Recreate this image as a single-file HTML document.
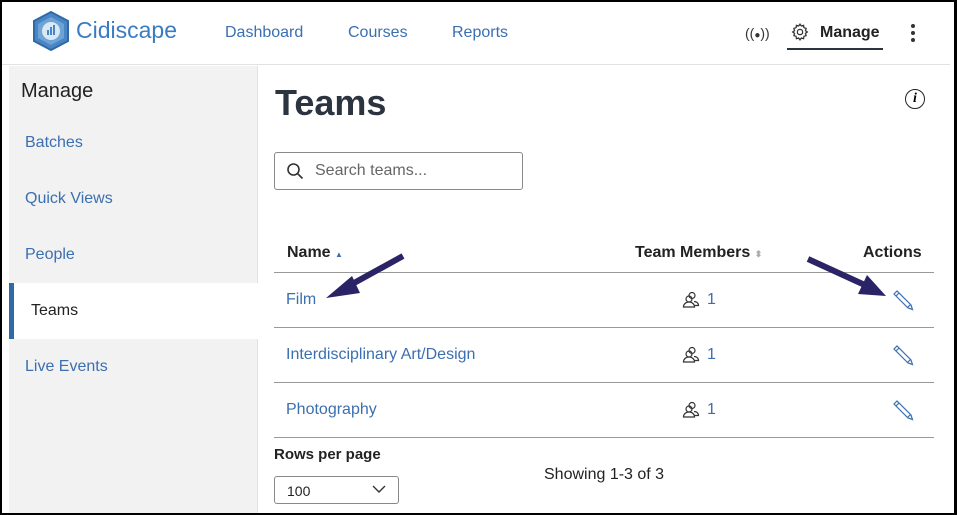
<!DOCTYPE html>
<html><head><style>
*{margin:0;padding:0;box-sizing:border-box}
body{width:957px;height:515px;overflow:hidden;background:#fff;font-family:"Liberation Sans",sans-serif;position:relative}
.frame{position:absolute;inset:0;border:2px solid #000;border-right-width:3px;border-bottom-width:2px;z-index:10;pointer-events:none}
.a{position:absolute;white-space:nowrap}
.nav{color:#3b6fb0;font-size:16px;top:24px}
.side{position:absolute;left:9px;top:66px;width:249px;height:449px;background:#f2f2f2;border-right:1px solid #e2e2e2}
.si{position:absolute;left:16px;font-size:16px;color:#3b6fb0}
.row{position:absolute;left:274px;width:660px;border-top:1px solid #999}
.lnk{color:#3b6fb0;font-size:16px}
</style></head><body>
<div class="frame"></div>
<svg class="a" style="left:30px;top:10px" width="42" height="42" viewBox="0 0 42 42">
<polygon points="21,2 38,11 38,31 21,40 4,31 4,11" fill="#4a86c5" stroke="#2f6aa8" stroke-width="2"/>
<polygon points="21,7 34,14 34,28 21,35 8,28 8,14" fill="#6ea3d6"/>
<circle cx="21" cy="21" r="9" fill="#d9e8f5"/>
<rect x="17" y="20" width="2" height="5" fill="#4a86c5"/><rect x="20" y="17" width="2" height="8" fill="#4a86c5"/><rect x="23" y="15" width="2" height="10" fill="#4a86c5"/>
</svg>
<div class="a" style="left:76px;top:17px;font-size:23px;color:#3a7cc1">Cidiscape</div>
<div class="a nav" style="left:225px">Dashboard</div>
<div class="a nav" style="left:348px">Courses</div>
<div class="a nav" style="left:452px">Reports</div>
<div class="a" style="left:745px;top:25px;font-size:14px;color:#333">((<span style="font-size:10px">●</span>))</div>
<svg class="a" style="left:790px;top:22px" width="20" height="20" viewBox="0 0 24 24" fill="none" stroke="#333" stroke-width="1.5"><circle cx="12" cy="12" r="3.2"/><path d="M12 2.5l1.6 2.3 2.7-.8.4 2.8 2.7.9-.9 2.7 2.3 1.6-2.3 1.6.9 2.7-2.7.9-.4 2.8-2.7-.8L12 21.5l-1.6-2.3-2.7.8-.4-2.8-2.7-.9.9-2.7L3.2 12l2.3-1.6-.9-2.7 2.7-.9.4-2.8 2.7.8z"/></svg>
<div class="a" style="left:820px;top:24px;font-size:16px;font-weight:bold;color:#222">Manage</div>
<div class="a" style="left:787px;top:48px;width:96px;height:2px;background:#2b3440"></div>
<div class="a" style="left:911px;top:24px;width:4px;height:4px;border-radius:2px;background:#333;box-shadow:0 7px 0 #333,0 14px 0 #333"></div>
<div class="a" style="left:0;top:64px;width:950px;height:1px;background:#e2e2e2"></div>
<div class="side">
<div class="a" style="left:12px;top:14px;font-size:20px;color:#222">Manage</div>
<div class="si" style="top:68px">Batches</div>
<div class="si" style="top:124px">Quick Views</div>
<div class="si" style="top:180px">People</div>
<div class="a" style="left:0;top:217px;width:249px;height:56px;background:#fff;border-left:5px solid #2f6aa8"></div>
<div class="si" style="top:236px;left:22px;color:#222">Teams</div>
<div class="si" style="top:292px">Live Events</div>
</div>
<div class="a" style="left:275px;top:82px;font-size:36px;font-weight:bold;color:#2b3440">Teams</div>
<div class="a" style="left:905px;top:89px;width:20px;height:20px;border:1.5px solid #222;border-radius:50%;font:italic bold 14px 'Liberation Serif',serif;text-align:center;line-height:17px">i</div>
<div class="a" style="left:274px;top:152px;width:249px;height:38px;border:1px solid #888;border-radius:3px"></div>
<svg class="a" style="left:286px;top:162px" width="18" height="18" viewBox="0 0 18 18" fill="none" stroke="#333" stroke-width="1.6"><circle cx="7.5" cy="7.5" r="5.5"/><path d="M11.5 11.5l5 5"/></svg>
<div class="a" style="left:315px;top:162px;font-size:16px;color:#666">Search teams...</div>
<div class="a" style="left:287px;top:244px;font-size:16px;font-weight:bold;color:#222">Name <span style="font-size:8px;color:#3b6fb0">▲</span></div>
<div class="a" style="left:635px;top:244px;font-size:16px;font-weight:bold;color:#222">Team Members <span style="font-size:9px;color:#aaa">⬍</span></div>
<div class="a" style="left:863px;top:244px;font-size:16px;font-weight:bold;color:#222">Actions</div>
<div class="row" style="top:272px"></div><div class="row" style="top:327px"></div><div class="row" style="top:382px"></div><div class="row" style="top:437px"></div>
<div class="a lnk" style="left:286px;top:291px">Film</div>
<div class="a lnk" style="left:286px;top:346px">Interdisciplinary Art/Design</div>
<div class="a lnk" style="left:286px;top:401px">Photography</div>
<svg width="0" height="0" style="position:absolute"><defs>
<g id="ppl" fill="none" stroke="#333" stroke-width="1.2"><circle cx="10" cy="4.5" r="3"/><circle cx="7" cy="8" r="3"/><path d="M1.5 16c0-3 2.5-5 5.5-5s5.5 2 5.5 5z M12 10.5c2.5 0 4.5 1.5 4.5 4h-4"/></g>
<g id="pen" fill="none" stroke="#3b6fb0" stroke-width="1.2"><path d="M2 5l3-3 14 14 1.5 4.5-4.5-1.5z M4 7l3-3 M15.5 18.5l3-3"/></g></defs></svg>
<svg class="a" style="left:682px;top:291px" width="18" height="17"><use href="#ppl"/></svg><div class="a lnk" style="left:707px;top:291px">1</div>
<svg class="a" style="left:682px;top:346px" width="18" height="17"><use href="#ppl"/></svg><div class="a lnk" style="left:707px;top:346px">1</div>
<svg class="a" style="left:682px;top:401px" width="18" height="17"><use href="#ppl"/></svg><div class="a lnk" style="left:707px;top:401px">1</div>
<svg class="a" style="left:892px;top:289px" width="22" height="22"><use href="#pen"/></svg>
<svg class="a" style="left:892px;top:344px" width="22" height="22"><use href="#pen"/></svg>
<svg class="a" style="left:892px;top:399px" width="22" height="22"><use href="#pen"/></svg>
<div class="a" style="left:274px;top:446px;font-size:15px;font-weight:bold;color:#222">Rows per page</div>
<div class="a" style="left:274px;top:476px;width:125px;height:28px;border:1px solid #888;border-radius:3px;font-size:14px;padding:6px 12px;color:#222">100</div>
<svg class="a" style="left:372px;top:485px" width="14" height="9"><path d="M1 1l6 6 6-6" fill="none" stroke="#333" stroke-width="1.4"/></svg>
<div class="a" style="left:544px;top:466px;font-size:16px;color:#222">Showing 1-3 of 3</div>
<svg class="a" style="left:0;top:0;z-index:5" width="957" height="515">
<g stroke="#2a2366" stroke-width="6" fill="#2a2366"><line x1="403" y1="256" x2="345" y2="288"/><polygon stroke-width="0" points="326,298 352,276 360,293"/>
<line x1="808" y1="259" x2="867" y2="286"/><polygon stroke-width="0" points="886,296 858,294 867,275"/></g>
</svg>
</body></html>
